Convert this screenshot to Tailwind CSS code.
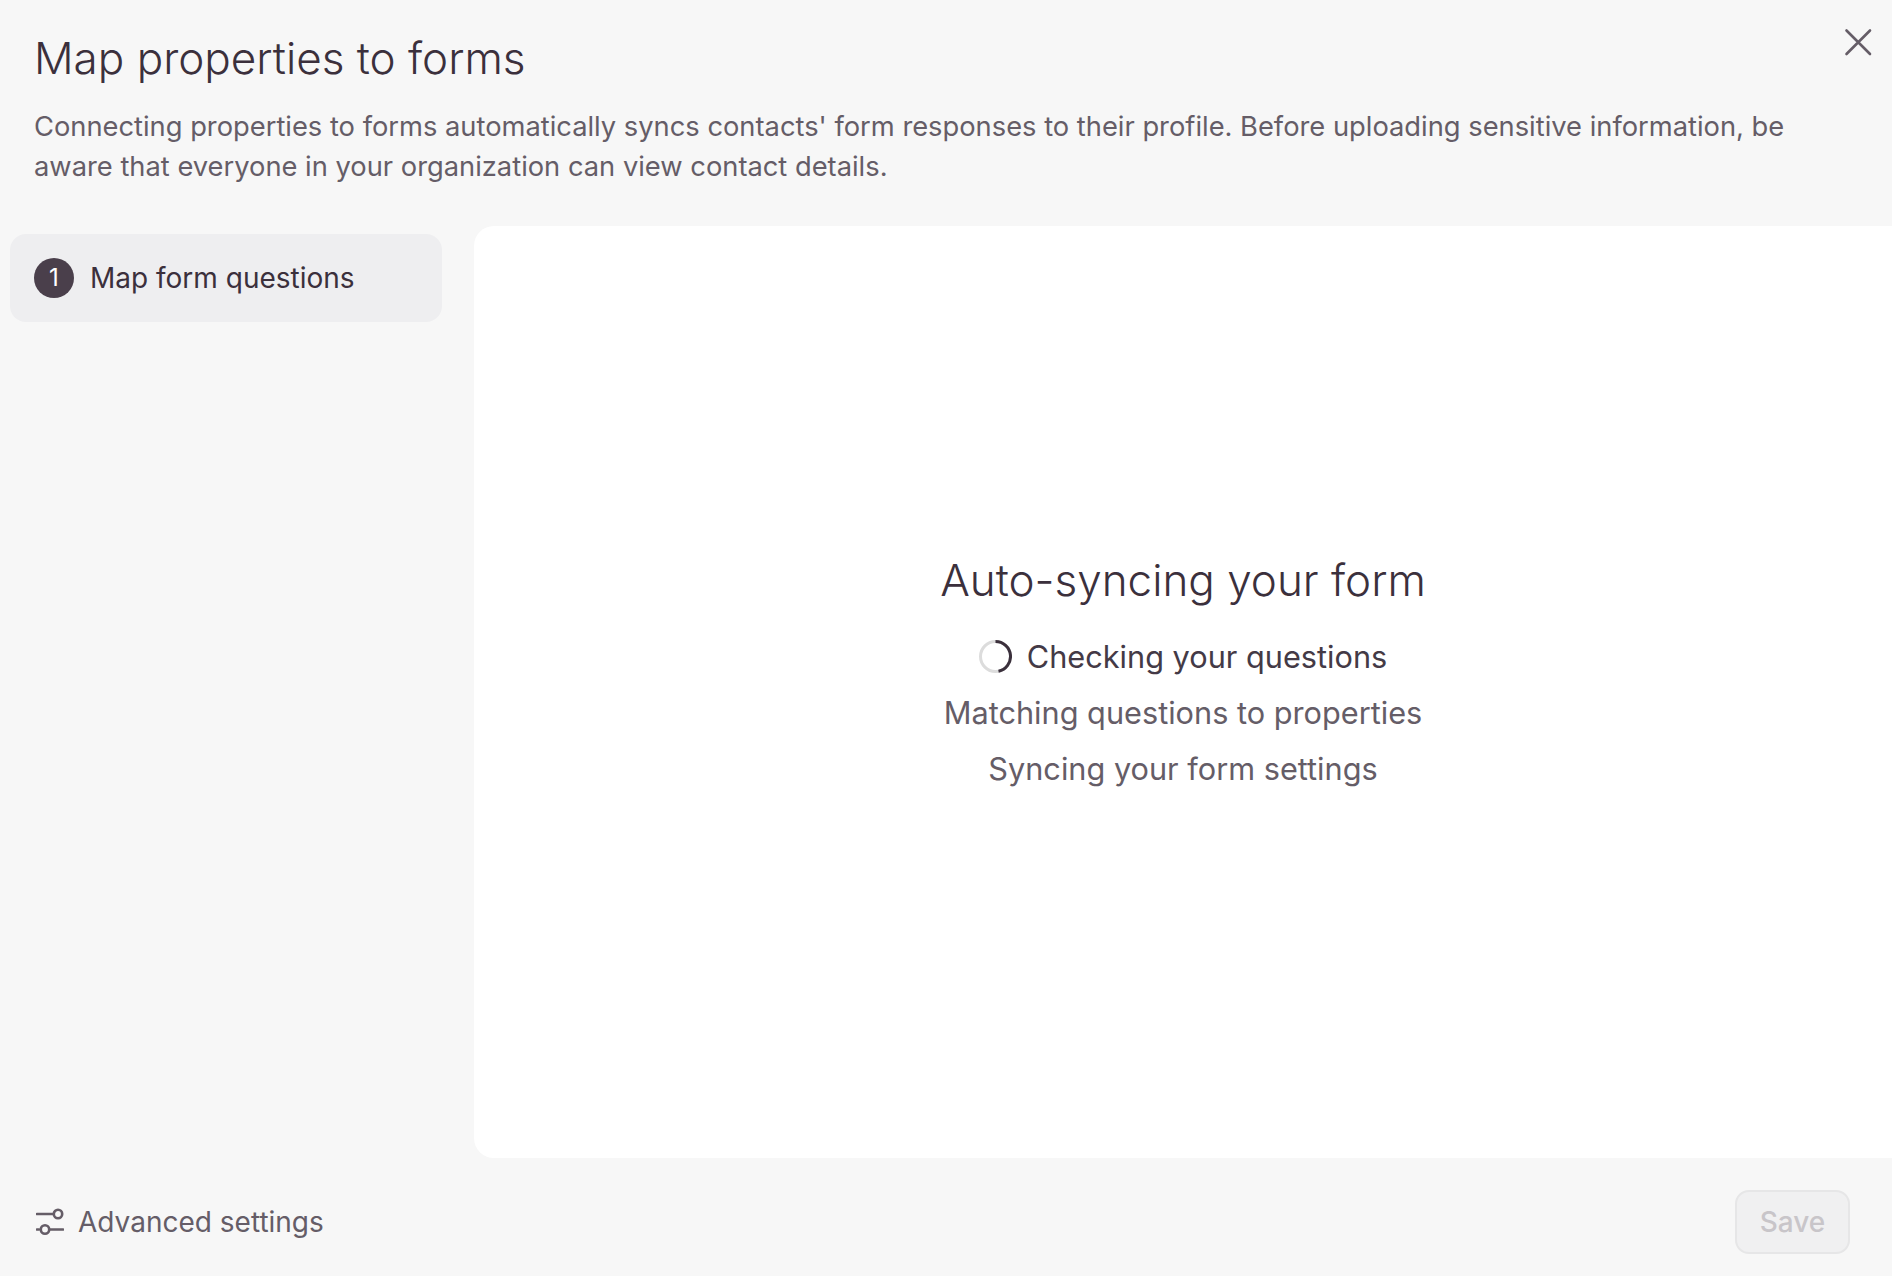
<!DOCTYPE html>
<html lang="en">
<head>
<meta charset="utf-8">
<title>Map properties to forms</title>
<script src="https://cdn.jsdelivr.net/npm/@tailwindcss/browser@4"></script>
</head>
<body class="m-0">
<div class="relative flex h-[1276px] w-full flex-col overflow-hidden bg-[#f7f7f7] font-['Inter',sans-serif] text-[#3b303c]">
  <button class="absolute right-[16px] top-[24px] text-[#655d67]" aria-label="Close">
    <svg class="block h-[36px] w-[36px]" viewBox="0 0 36 36" fill="none" stroke="currentColor" stroke-width="2.6" stroke-linecap="round"><path d="M6.5 6.5 30 30M30 6.5 6.5 30"/></svg>
  </button>
  <header class="h-[226px] shrink-0 px-[34px] pt-[30px]">
    <h1 class="text-[44px] leading-[56px] font-light">Map properties to forms</h1>
    <p class="mt-[21px] max-w-[1800px] text-[27.3px] leading-[40px] text-[#655d67]">Connecting properties to forms automatically syncs contacts' form responses to their profile. Before uploading sensitive information, be aware that everyone in your organization can view contact details.</p>
  </header>
  <main class="flex min-h-0 flex-1">
    <nav class="w-[474px] shrink-0 pl-[10px] pr-[32px] pt-[8px]">
      <div class="flex h-[88px] items-center gap-[16px] rounded-[16px] bg-[#eeeef0] px-[24px]">
        <span class="flex h-[40px] w-[40px] items-center justify-center rounded-full bg-[#4a3f4b] text-[24px] text-white">1</span>
        <span class="text-[28px] text-[#3b303c]">Map form questions</span>
      </div>
    </nav>
    <section class="flex flex-1 flex-col items-center justify-center rounded-l-[20px] bg-white pb-[36px] text-center">
      <h2 class="text-[44px] leading-[56px] font-light">Auto-syncing your form</h2>
      <ul class="mt-[21px] flex flex-col text-[30.7px] leading-[56px] text-[#655d67]">
        <li class="flex items-center justify-center gap-[15px] text-[#443a46]">
          <svg class="h-[33px] w-[33px]" viewBox="0 0 33 33" fill="none" stroke-width="3"><circle cx="16.5" cy="16.5" r="15" stroke="#dcdcdc"/><path d="M16.5 1.5A15 15 0 0 1 19.5 31.2" stroke="#3b303c"/></svg>
          Checking your questions
        </li>
        <li>Matching questions to properties</li>
        <li>Syncing your form settings</li>
      </ul>
    </section>
  </main>
  <footer class="flex h-[118px] shrink-0 items-center justify-between pl-[36px] pr-[42px] pt-[9px]">
    <button class="flex items-center gap-[14px] text-[28px] text-[#655d67]">
      <svg class="h-[28px] w-[28px]" viewBox="0 0 28 28" fill="none" stroke="currentColor" stroke-width="2.6" stroke-linecap="round"><path d="M1 6H17M14 21.5H27M1 21.5H3"/><circle cx="22" cy="6" r="4.2"/><circle cx="9" cy="21.5" r="4.2"/></svg>
      Advanced settings
    </button>
    <button disabled class="h-[64px] w-[115px] rounded-[14px] border-2 border-[#e6e6e7] bg-[#f0f0f1] text-[28px] font-medium text-[#c8c5c9]">Save</button>
  </footer>
</div>
</body>
</html>
